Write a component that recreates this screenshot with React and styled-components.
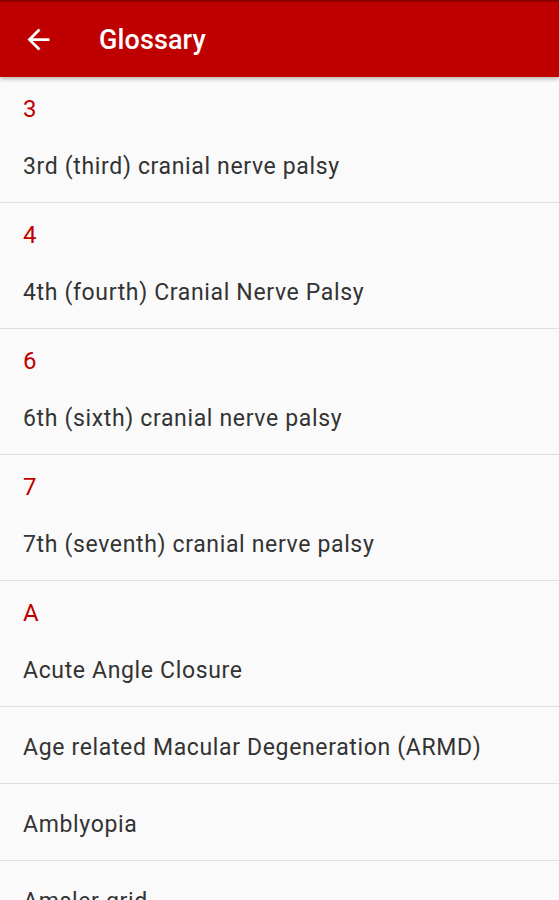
import React from 'react'
import styled, { createGlobalStyle } from 'styled-components';

const GlobalStyle = createGlobalStyle`
  html, body {
    margin: 0;
    padding: 0;
    background: #fafafa;
    font-family: Roboto, "Noto Sans", Arial, sans-serif;
  }
  body {
    height: 900px;
    overflow: hidden;
  }
`

const Page = styled.div`
  display: flex;
  flex-direction: column;
  height: 900px;
  overflow: hidden;
  background: #fafafa;
`

const Toolbar = styled.header`
  position: relative;
  z-index: 1;
  display: flex;
  align-items: center;
  height: 75px;
  flex-shrink: 0;
  background: #bf0000;
  border-top: 2px solid #8c0000;
  box-shadow: 0 2px 4px rgba(0, 0, 0, 0.28);
`

const BackButton = styled.button`
  display: flex;
  align-items: center;
  justify-content: center;
  width: 33px;
  height: 33px;
  margin-left: 22px;
  padding: 0;
  border: none;
  background: none;
  color: #fff;
`

const Title = styled.h1`
  margin: 0 0 0 44px;
  color: #fff;
  font-size: 27px;
  font-weight: 500;
  letter-spacing: 0.1px;
`

const List = styled.div`
  display: flex;
  flex-direction: column;
`

const Section = styled.section`
  border-bottom: 1px solid #e0e0e0;
`

const Letter = styled.div`
  height: 48px;
  box-sizing: border-box;
  padding: 18px 0 0 23px;
  color: #c00000;
  font-size: 24px;
  line-height: 28px;
  letter-spacing: 0.5px;
`

const Item = styled.div`
  display: flex;
  align-items: center;
  height: 77px;
  box-sizing: border-box;
  padding: 5px 0 0 23px;
  color: #333;
  font-size: 23px;
  letter-spacing: 0.65px;
  white-space: nowrap;
  border-top: ${p => (p.$first ? 'none' : '1px solid #e0e0e0')};
`

const glossary = [
  { letter: '3', terms: ['3rd (third) cranial nerve palsy'] },
  { letter: '4', terms: ['4th (fourth) Cranial Nerve Palsy'] },
  { letter: '6', terms: ['6th (sixth) cranial nerve palsy'] },
  { letter: '7', terms: ['7th (seventh) cranial nerve palsy'] },
  {
    letter: 'A',
    terms: [
      'Acute Angle Closure',
      'Age related Macular Degeneration (ARMD)',
      'Amblyopia',
      'Amsler grid',
      'Angle Closure Glaucoma',
    ],
  },
];

function ArrowBack() {
  return (
    <svg width="33" height="33" viewBox="0 0 24 24" fill="currentColor">
      <path d="M20 11H7.83l5.59-5.59L12 4l-8 8 8 8 1.41-1.41L7.83 13H20v-2z" />
    </svg>
  );
}

export default function App() {
  return (
    <Page>
      <GlobalStyle />
      <Toolbar>
        <BackButton aria-label="Back">
          <ArrowBack />
        </BackButton>
        <Title>Glossary</Title>
      </Toolbar>
      <List>
        {glossary.map(group => (
          <Section key={group.letter}>
            <Letter>{group.letter}</Letter>
            {group.terms.map((term, i) => (
              <Item key={term} $first={i === 0}>{term}</Item>
            ))}
          </Section>
        ))}
      </List>
    </Page>
  );
};
